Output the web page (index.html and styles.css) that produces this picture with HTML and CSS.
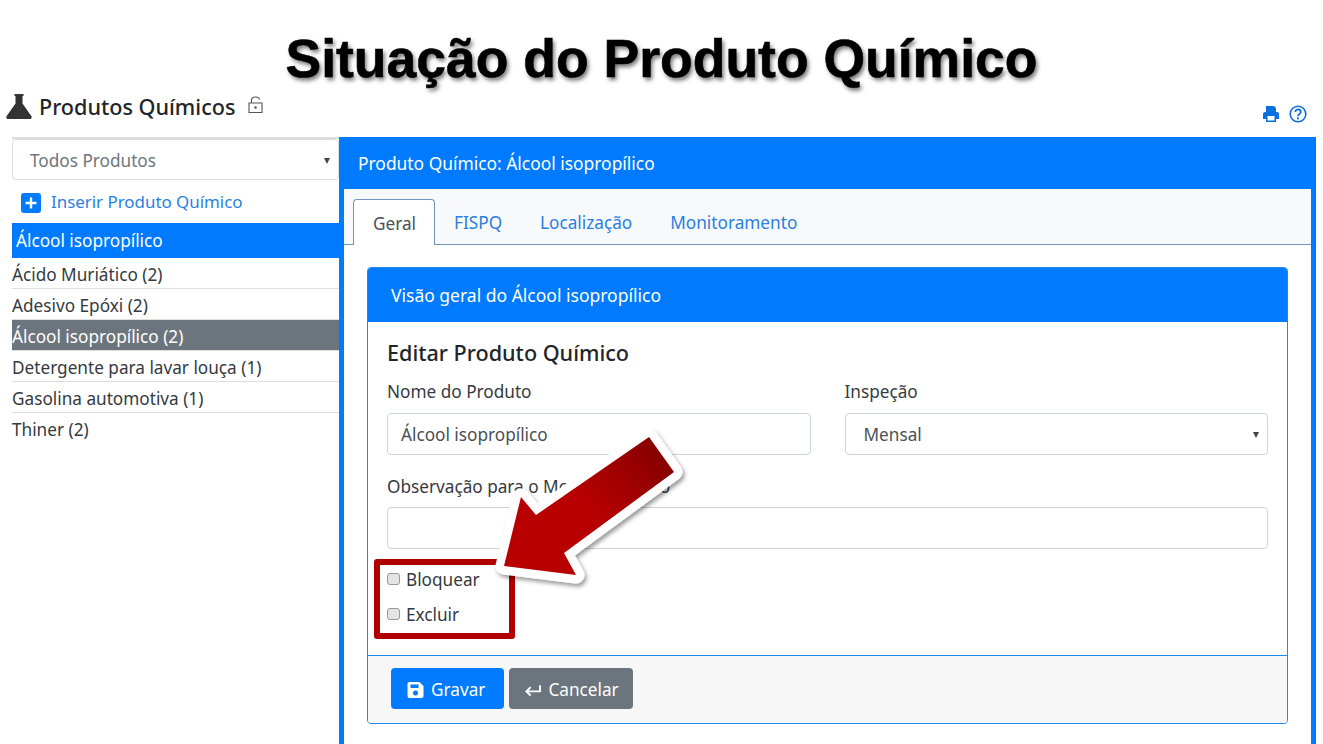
FILE: index.html
```html
<!DOCTYPE html>
<html>
<head>
  <meta charset="utf-8">
  <link rel="stylesheet" href="styles.css">
</head>
<body>
  <h1 class="slide-title">Situação do Produto Químico</h1>

  <div class="page-head">
    <h2 class="page-name">
      <svg class="flask-icon" viewBox="0 0 26 25"><path fill="#333" d="M8.500 0h9v2h-1v7.500L25.300 22c1 1.500 0 3-1.500 3H2.200C.7 25-.3 23.500.7 22L9.500 9.500V2h-1z"/></svg>
      Produtos Químicos
      <svg class="lock-icon" viewBox="0 0 15 17"><path fill="none" stroke="#555" stroke-width="1.100" d="M1 7h13v9.500H1zM3.500 7V4C3.500 0 11 0 11.500 3.500"/><circle cx="7.500" cy="11.500" r="1.300" fill="#555"/></svg>
    </h2>
    <div class="page-tools">
      <svg class="tool-icon" viewBox="0 0 18 18"><path fill="#0b6fe0" d="M4 1h8l2 2v4H4zM1 9a2 2 0 0 1 2-2h12a2 2 0 0 1 2 2v5h-3v3H4v-3H1zm4.500 2v4.500h7V11z"/></svg>
      <svg class="tool-icon" viewBox="0 0 18 18"><circle cx="9" cy="9" r="7.800" fill="none" stroke="#0b6fe0" stroke-width="1.600"/><path fill="none" stroke="#0b6fe0" stroke-width="1.800" d="M6.300 7c0-3.400 5.400-3.400 5.400 0 0 2.200-2.700 2-2.700 4.200"/><circle cx="9" cy="13.400" r="1.100" fill="#0b6fe0"/></svg>
    </div>
  </div>

  <div class="layout">
    <aside class="sidebar">
      <div class="select side-select">Todos Produtos<span class="caret"></span></div>
      <a class="insert-link">
        <svg class="plus-icon" viewBox="0 0 20 20"><rect width="20" height="20" rx="3" fill="#007bff"/><path fill="#fff" d="M8.800 4.500h2.400v4.300h4.300v2.400h-4.300v4.300H8.800v-4.300H4.500V8.800h4.300z"/></svg>
        Inserir Produto Químico
      </a>
      <div class="side-title">Álcool isopropílico</div>
      <ul class="product-list">
        <li>Ácido Muriático (2)</li>
        <li>Adesivo Epóxi (2)</li>
        <li class="selected">Álcool isopropílico (2)</li>
        <li>Detergente para lavar louça (1)</li>
        <li>Gasolina automotiva (1)</li>
        <li>Thiner (2)</li>
      </ul>
    </aside>

    <main class="panel">
      <div class="panel-head">Produto Químico: Álcool isopropílico</div>
      <div class="tabs">
        <a class="tab active">Geral</a>
        <a class="tab">FISPQ</a>
        <a class="tab">Localização</a>
        <a class="tab">Monitoramento</a>
      </div>
      <div class="panel-body">
        <section class="card">
          <div class="card-head">Visão geral do Álcool isopropílico</div>
          <div class="card-body">
            <h3 class="form-title">Editar Produto Químico</h3>
            <div class="form-row">
              <div class="field">
                <label>Nome do Produto</label>
                <div class="input">Álcool isopropílico</div>
              </div>
              <div class="field">
                <label>Inspeção</label>
                <div class="select form-select">Mensal<span class="caret"></span></div>
              </div>
            </div>
            <div class="field field-note">
              <label>Observação para o Monitoramento</label>
              <div class="input"></div>
            </div>
            <div class="check"><span class="box"></span>Bloquear</div>
            <div class="check"><span class="box"></span>Excluir</div>
          </div>
          <div class="card-foot">
            <button class="btn btn-blue">
              <svg class="btn-icon" viewBox="0 0 16 16"><path fill="#fff" fill-rule="evenodd" d="M2 0h10l4 4v10a2 2 0 0 1-2 2H2a2 2 0 0 1-2-2V2a2 2 0 0 1 2-2zm1 2.500V6h8V2.500zM8 8.500a2.500 2.500 0 1 0 0 5 2.500 2.500 0 0 0 0-5z"/></svg>
              Gravar
            </button>
            <button class="btn btn-gray">
              <svg class="btn-icon" viewBox="0 0 18 16"><path fill="none" stroke="#fff" stroke-width="2" d="M17 3v6.500H3M7 5 2.500 9.500 7 14"/></svg>
              Cancelar
            </button>
          </div>
        </section>
      </div>
    </main>
  </div>

  <div class="mark-box"></div>
  <svg class="mark-arrow" viewBox="0 0 200 170">
    <defs>
      <linearGradient id="arrowFill" gradientUnits="userSpaceOnUse" x1="165" y1="25" x2="60" y2="110">
        <stop offset="0" stop-color="#860000"/>
        <stop offset="0.7" stop-color="#b80000"/>
        <stop offset="1" stop-color="#b80000"/>
      </linearGradient>
      <filter id="arrowShadow" x="-15%" y="-15%" width="135%" height="135%">
        <feDropShadow dx="2" dy="3" stdDeviation="2" flood-color="#000" flood-opacity="0.4"/>
      </filter>
    </defs>
    <polygon filter="url(#arrowShadow)" fill="#fff" stroke="#fff" stroke-width="17" stroke-linejoin="round" points="149,9 174,44 64,125 76,147 4,138 21,69 36,87"/>
    <polygon fill="url(#arrowFill)" points="149,9 174,44 64,125 76,147 4,138 21,69 36,87"/>
  </svg>
</body>
</html>
```

FILE: styles.css
```css
* {
  box-sizing: border-box;
}

html, body {
  height: 744px;
  margin: 0;
  overflow: hidden;
}

body {
  position: relative;
  font-family: "Noto Sans", Arial, sans-serif;
  font-size: 17.2px;
  color: #343a40;
  background-color: #fff;
}

.slide-title {
  height: 91px;
  margin: 0;
  padding-top: 29px;
  font-family: "Liberation Sans", Arial, sans-serif;
  font-size: 53.5px;
  line-height: 60px;
  font-weight: bold;
  text-align: center;
  color: #000;
  -webkit-text-stroke: 0.6px #000;
  text-shadow: 2px 3px 4px rgba(0, 0, 0, 0.55);
}

.page-head {
  display: flex;
  justify-content: space-between;
  height: 46px;
  padding: 0 16px 0 6px;
}

.page-name {
  display: flex;
  align-items: center;
  height: 30px;
  margin: 0;
  font-size: 21.6px;
  font-weight: 500;
  color: #212529;
}

.flask-icon {
  width: 26px;
  height: 25px;
  margin-right: 7px;
}

.lock-icon {
  width: 15px;
  height: 17px;
  margin: -3px 0 0 13px;
}

.page-tools {
  display: flex;
  gap: 9px;
  padding-top: 14px;
}

.tool-icon {
  width: 18px;
  height: 18px;
}

.layout {
  display: flex;
  height: 607px;
  padding-left: 12px;
}

.sidebar {
  width: 327px;
  flex-shrink: 0;
  border-top: 2px solid #ddd;
}

.select, .input {
  position: relative;
  height: 42px;
  padding: 0 13px;
  line-height: 42px;
  color: #495057;
  background-color: #fff;
  border: 1px solid #ced4da;
  border-radius: 4px;
}

.form-select {
  padding-left: 18px;
}

.side-select {
  height: 41px;
  padding-left: 17px;
  line-height: 42px;
  color: #6c757d;
  border-color: #ddd;
}

.caret {
  position: absolute;
  top: 18px;
  right: 8px;
  border-top: 6px solid #444;
  border-left: 3px solid transparent;
  border-right: 3px solid transparent;
}

.insert-link {
  display: flex;
  align-items: center;
  height: 43px;
  padding-left: 9px;
  font-size: 16.9px;
  color: #2a7fe0;
}

.plus-icon {
  width: 20px;
  height: 20px;
  margin: 3px 10px 0 0;
}

.side-title {
  height: 35px;
  padding-left: 4px;
  line-height: 35px;
  color: #fff;
  background-color: #007bff;
}

.product-list {
  margin: 0;
  padding: 0;
  list-style: none;
}

.product-list li {
  height: 31px;
  line-height: 33px;
  border-bottom: 1px solid #ddd;
}

.product-list li:last-child {
  border-bottom: 0;
}

.product-list .selected {
  color: #fff;
  background-color: #6c757d;
}

.panel {
  width: 977px;
  border: solid #007bff;
  border-width: 0 5px;
  background-color: #fff;
}

.panel-head {
  height: 52px;
  margin: 0 -5px;
  padding-left: 19px;
  font-size: 17.4px;
  line-height: 53px;
  color: #fff;
  background-color: #007bff;
}

.tabs {
  display: flex;
  height: 56px;
  padding: 10px 0 0 9px;
  background-color: #f8f9fa;
  border-bottom: 1px solid #6f94bd;
}

.tab {
  height: 46px;
  padding: 0 19px;
  line-height: 48px;
  color: #2a7fe0;
}

.tab.active {
  padding-right: 18px;
  color: #495057;
  background-color: #fff;
  border: 1px solid #6f94bd;
  border-bottom: 0;
  border-radius: 4px 4px 0 0;
}

.panel-body {
  padding: 22px 23px 0;
}

.card {
  height: 457px;
  border: 1px solid #1e88f5;
  border-radius: 4px;
  overflow: hidden;
}

.card-head {
  height: 54px;
  padding-left: 23px;
  font-size: 17.5px;
  line-height: 54px;
  color: #fff;
  background-color: #007bff;
}

.card-body {
  height: 333px;
  padding: 16px 19px 0;
}

.form-title {
  margin: 0 0 12px;
  font-size: 21.6px;
  line-height: 30px;
  font-weight: 500;
  color: #212529;
}

.form-row {
  display: flex;
  gap: 34px;
}

.form-row .field {
  flex: 1;
}

.field {
  margin-bottom: 20px;
}

.field label {
  display: block;
  margin-bottom: 9px;
  line-height: 24px;
}

.field-note {
  margin-bottom: 12px;
}

.field-note label {
  margin-bottom: 8px;
}

.check {
  display: flex;
  align-items: center;
  height: 35px;
  padding-top: 2px;
}

.box {
  width: 13px;
  height: 12px;
  margin: -2px 6px 0 0;
  background-color: #e4e4e4;
  border: 1px solid #999;
  border-radius: 3px;
}

.card-foot {
  display: flex;
  gap: 5px;
  height: 68px;
  padding: 12px 23px;
  background-color: #f7f7f7;
  border-top: 1px solid #1e88f5;
}

.btn {
  display: flex;
  align-items: center;
  height: 41px;
  padding: 2px 19px 0 16px;
  font-family: inherit;
  font-size: 17.2px;
  color: #fff;
  border: 0;
  border-radius: 4px;
}

.btn-blue {
  background-color: #007bff;
}

.btn-gray {
  padding-left: 15px;
  padding-right: 14px;
  background-color: #6c757d;
}

.btn-icon {
  width: 17px;
  height: 16px;
  margin-right: 7px;
}

.mark-box {
  position: absolute;
  left: 374px;
  top: 559px;
  width: 141px;
  height: 80px;
  border: 6px solid #b00000;
  border-radius: 3px;
}

.mark-arrow {
  position: absolute;
  left: 500px;
  top: 428px;
  width: 200px;
  height: 170px;
  overflow: visible;
}
```
